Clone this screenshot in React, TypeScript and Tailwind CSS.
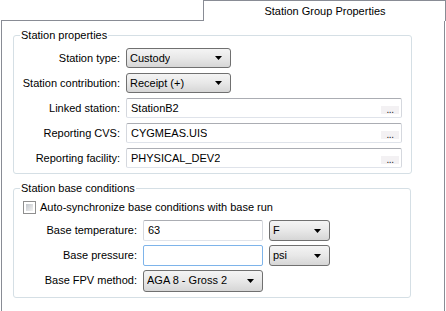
import React from 'react';

const font = { fontFamily: '"Liberation Sans", Arial, sans-serif' };

function Arrow() {
  return (
    <svg width="7" height="4" viewBox="0 0 7 4" className="shrink-0">
      <path d="M0 0 H7 L3.5 4 Z" fill="#000" />
    </svg>
  );
}

function Combo({ value, width }: { value: string; width: string }) {
  return (
    <div
      className={`${width} h-[20px] flex items-center justify-between pl-[3px] pr-[8px] rounded-[3px] border border-[#707070] bg-gradient-to-b from-[#f4f4f4] via-[#e8e8e8] to-[#d6d6d6] text-[11px] text-black`}
    >
      <span className="truncate leading-none">{value}</span>
      <Arrow />
    </div>
  );
}

function TextBox({ value, width, browse, focused }: { value: string; width: string; browse?: boolean; focused?: boolean }) {
  const border = focused
    ? 'border-[#7eb4ea]'
    : 'border-[#dfe3ea] border-t-[#abadb3] border-l-[#d5d8de] border-r-[#d5d8de]';
  return (
    <div className={`${width} h-[20px] flex items-center justify-between pl-[4px] pr-[2px] rounded-[2px] border ${border} bg-white text-[11px] text-black`}>
      <span className="truncate leading-none">{value}</span>
      {browse && (
        <span className="w-[18px] h-[8px] mt-[3px] bg-[#f3f1f3] flex items-end justify-center text-[10px] leading-[8px] tracking-[-0.5px] text-[#222]">
          ...
        </span>
      )}
    </div>
  );
}

function Field({ label, labelWidth, children }: { label: string; labelWidth: string; children: React.ReactNode }) {
  return (
    <div className="flex items-center h-[20px]">
      <span className={`${labelWidth} shrink-0 text-right text-[11px] text-black`}>{label}</span>
      <div className="flex items-center gap-[6px] ml-[6px]">{children}</div>
    </div>
  );
}

export default function App() {
  return (
    <div className="w-[446px] h-[311px] bg-white overflow-hidden flex flex-col" style={font}>
      <div className="flex h-[21px] shrink-0">
        <div className="w-[202px] ml-[1px] border-b border-[#898c95]" />
        <div className="w-[243px] border-t border-l border-r border-[#898c95] flex items-center justify-center text-[11px] text-black pl-[1px]">
          Station Group Properties
        </div>
      </div>

      <div className="ml-[1px] w-[444px] flex-1 border-l border-r border-[#898c95] px-[11px]">
        <fieldset className="mt-[8px] w-[399px] border border-[#d5dfe5] rounded-[3px] px-0">
          <legend className="ml-[6px] px-[1px] text-[11px] leading-[13px] text-black">Station properties</legend>
          <div className="flex flex-col gap-[5px] pt-[6px] pb-[5px]">
            <Field label="Station type:" labelWidth="w-[106px]">
              <Combo value="Custody" width="w-[105px]" />
            </Field>
            <Field label="Station contribution:" labelWidth="w-[106px]">
              <Combo value="Receipt (+)" width="w-[105px]" />
            </Field>
            <Field label="Linked station:" labelWidth="w-[106px]">
              <TextBox value="StationB2" width="w-[276px]" browse />
            </Field>
            <Field label="Reporting CVS:" labelWidth="w-[106px]">
              <TextBox value="CYGMEAS.UIS" width="w-[276px]" browse />
            </Field>
            <Field label="Reporting facility:" labelWidth="w-[106px]">
              <TextBox value="PHYSICAL_DEV2" width="w-[276px]" browse />
            </Field>
          </div>
        </fieldset>

        <fieldset className="mt-[8px] w-[398px] border border-[#d5dfe5] rounded-[3px] px-0">
          <legend className="ml-[6px] px-[1px] text-[11px] leading-[13px] text-black">Station base conditions</legend>
          <div className="flex flex-col pb-[6px]">
            <label className="mt-[5px] h-[14px] flex items-center gap-[4px] pl-[9px] text-[11px] text-black">
              <span className="w-[13px] h-[13px] border border-[#8f8f8f] bg-white p-[2px] shrink-0">
                <span className="block w-full h-full bg-gradient-to-br from-[#c3c7cc] to-[#f2f2f2]" />
              </span>
              Auto-synchronize base conditions with base run
            </label>
            <div className="flex flex-col gap-[4px] mt-[6px]">
              <div className="h-[21px] flex items-center">
                <Field label="Base temperature:" labelWidth="w-[123px]">
                  <TextBox value="63" width="w-[120px] !h-[21px]" />
                  <Combo value="F" width="w-[61px] !h-[21px]" />
                </Field>
              </div>
              <div className="h-[21px] flex items-center">
                <Field label="Base pressure:" labelWidth="w-[123px]">
                  <TextBox value="" width="w-[120px] !h-[21px]" focused />
                  <Combo value="psi" width="w-[61px] !h-[21px]" />
                </Field>
              </div>
              <div className="h-[21px] flex items-center">
                <Field label="Base FPV method:" labelWidth="w-[123px]">
                  <Combo value="AGA 8 - Gross 2" width="w-[120px] !h-[22px]" />
                </Field>
              </div>
            </div>
          </div>
        </fieldset>
      </div>
    </div>
  );
}
